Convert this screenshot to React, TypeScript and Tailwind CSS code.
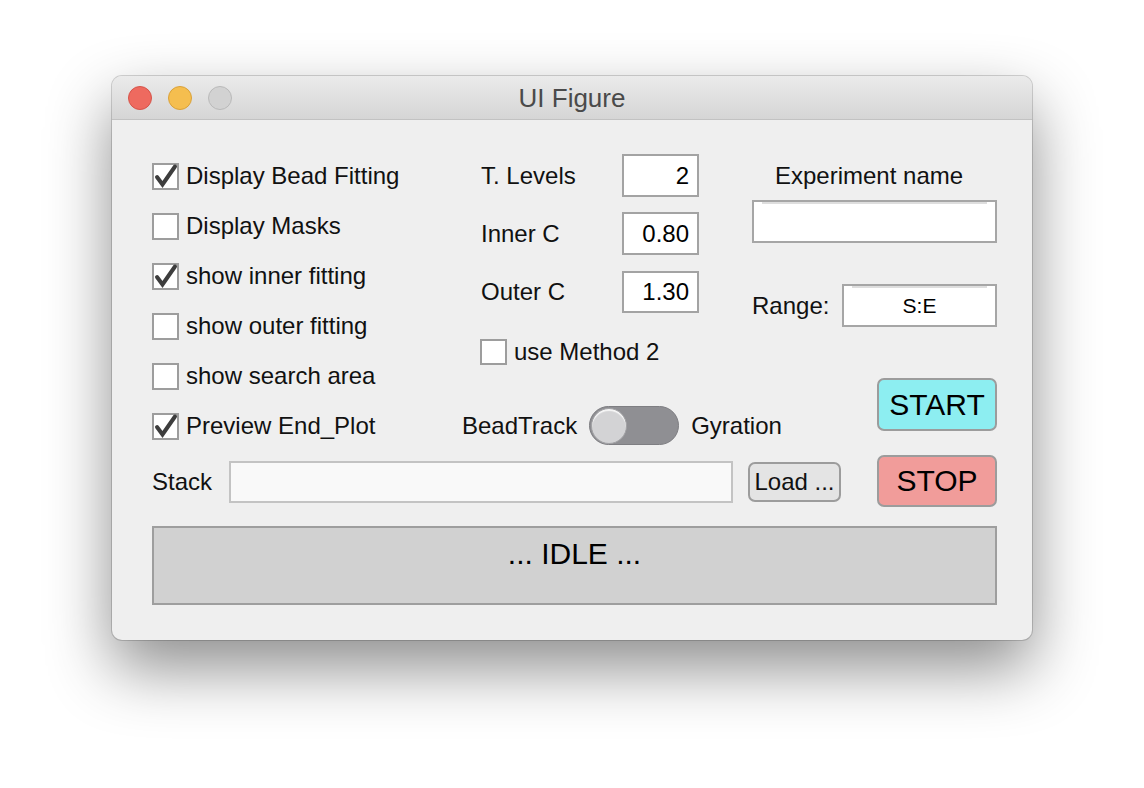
import React from 'react';

const font = { fontFamily: '"Liberation Sans", Arial, Helvetica, sans-serif' };

const CheckBox: React.FC<{ checked?: boolean }> = ({ checked }) => (
    <div className="w-[27px] h-[27px] border-2 border-[#9d9d9d] bg-white shrink-0 relative">
        {checked && (
            <svg viewBox="0 0 27 27" className="absolute -left-[2px] -top-[2px] w-[27px] h-[27px]">
                <path d="M5 14 L10.5 21.5 L23 3.5" fill="none" stroke="#3d3d3d" strokeWidth="4" strokeLinecap="round" strokeLinejoin="miter" />
            </svg>
        )}
    </div>
);

const CheckRow: React.FC<{ label: string; checked?: boolean }> = ({ label, checked }) => (
    <div className="h-[50px] flex items-center gap-[7px]">
        <CheckBox checked={checked} />
        <span className="text-[24px] leading-none text-[#111]">{label}</span>
    </div>
);

const NumField: React.FC<{ label: string; value: string; h: string }> = ({ label, value, h }) => (
    <div className="flex items-center pl-[19px]">
        <span className="w-[141px] shrink-0 text-[24px] leading-none text-[#111]">{label}</span>
        <div className={`w-[77px] shrink-0 ${h} border-2 border-[#a3a3a3] bg-white flex items-center justify-end pr-[8px] text-[24px] leading-none`}>
            {value}
        </div>
    </div>
);

export default function App() {
    return (
        <div className="min-h-screen w-full bg-white pt-[76px] pl-[112px]" style={font}>
            <div className="w-[920px] h-[564px] rounded-[10px] bg-[#efefef] overflow-hidden shadow-[0_28px_64px_rgba(0,0,0,0.45),0_0_0_1px_rgba(0,0,0,0.16)]">
                {/* title bar */}
                <div className="h-[44px] relative flex items-center justify-center bg-gradient-to-b from-[#ebebeb] to-[#d5d5d5] border-b border-[#c2c2c2]">
                    <div className="absolute left-[16px] top-[10px] flex gap-[16px]">
                        <div className="w-[24px] h-[24px] rounded-full bg-[#ee6a5f] border border-[#d5544a]" />
                        <div className="w-[24px] h-[24px] rounded-full bg-[#f5be4f] border border-[#d9a13a]" />
                        <div className="w-[24px] h-[24px] rounded-full bg-[#d2d2d2] border border-[#b9b9b9]" />
                    </div>
                    <span className="text-[26px] leading-none text-[#4a4a4a]">UI Figure</span>
                </div>

                {/* content */}
                <div className="pl-[40px] pr-[35px] pt-[31px] flex flex-col">
                    <div className="flex items-start">
                        <div className="w-[600px] shrink-0 flex flex-col">
                            <div className="flex">
                                <div className="w-[310px] shrink-0 flex flex-col">
                                    <CheckRow label="Display Bead Fitting" checked />
                                    <CheckRow label="Display Masks" />
                                    <CheckRow label="show inner fitting" checked />
                                    <CheckRow label="show outer fitting" />
                                    <CheckRow label="show search area" />
                                    <CheckRow label="Preview End_Plot" checked />
                                </div>
                                <div className="w-[290px] shrink-0 flex flex-col pt-[3px] whitespace-nowrap">
                                    <NumField label="T. Levels" value="2" h="h-[43px]" />
                                    <div className="h-[15px]" />
                                    <NumField label="Inner C" value="0.80" h="h-[43px]" />
                                    <div className="h-[16px]" />
                                    <NumField label="Outer C" value="1.30" h="h-[42px]" />
                                    <div className="flex items-center gap-[7px] pl-[18px] mt-[26px]">
                                        <div className="w-[27px] h-[26px] shrink-0 border-2 border-[#9d9d9d] bg-white" />
                                        <span className="text-[24px] leading-none text-[#111]">use Method 2</span>
                                    </div>
                                    <div className="flex items-center mt-[41px]">
                                        <span className="shrink-0 text-[24px] leading-none text-[#111]">BeadTrack</span>
                                        <div className="ml-[12px] w-[90px] h-[39px] shrink-0 rounded-full bg-[#8f8f93] border border-[#7e7e82] flex items-center p-[1px]">
                                            <div className="w-[36px] h-[36px] shrink-0 rounded-full bg-[#d3d3d5] border border-[#a2a2a5] shadow-[inset_0_2px_1px_rgba(255,255,255,0.8)]" />
                                        </div>
                                        <span className="ml-[12px] shrink-0 text-[24px] leading-none text-[#111]">Gyration</span>
                                    </div>
                                </div>
                            </div>
                            <div className="flex items-center mt-[10px] h-[42px] whitespace-nowrap">
                                <span className="w-[77px] shrink-0 text-[24px] leading-none text-[#111]">Stack</span>
                                <div className="w-[504px] h-[42px] shrink-0 border-2 border-[#c3c3c3] bg-[#f9f9f9]" />
                                <div className="ml-[15px] w-[93px] h-[40px] shrink-0 rounded-[7px] border-2 border-[#9c9c9c] bg-[#e4e4e4] flex items-center justify-center text-[24px] leading-none text-[#111]">
                                    Load ...
                                </div>
                            </div>
                        </div>

                        <div className="w-[245px] shrink-0 flex flex-col">
                            <div className="h-[49px] flex items-center pl-[23px] text-[24px] leading-none text-[#111]">Experiment name</div>
                            <div className="h-[43px] border-2 border-[#a6a6a6] bg-white">
                                <div className="h-[2px] mx-[8px] bg-[#dedede]" />
                            </div>
                            <div className="flex items-center justify-between mt-[41px]">
                                <span className="text-[24px] leading-none text-[#111]">Range:</span>
                                <div className="w-[155px] h-[43px] border-2 border-[#a6a6a6] bg-white flex flex-col">
                                    <div className="h-[2px] mx-[8px] bg-[#dedede]" />
                                    <div className="flex-1 flex items-center justify-center text-[21px] leading-none pb-[2px]">S:E</div>
                                </div>
                            </div>
                            <div className="self-end mt-[51px] w-[120px] h-[53px] rounded-[7px] border-2 border-[#9c9c9c] bg-[#8deef1] flex items-center justify-center text-[30px] leading-none text-black">
                                START
                            </div>
                            <div className="self-end mt-[24px] w-[120px] h-[52px] rounded-[7px] border-2 border-[#9c9c9c] bg-[#f19c9a] flex items-center justify-center text-[30px] leading-none text-black">
                                STOP
                            </div>
                        </div>
                    </div>

                    <div className="mt-[19px] h-[79px] border-2 border-[#9e9e9e] bg-[#d1d1d1] flex justify-center pt-[11px] text-[30px] leading-none text-black">
                        ... IDLE ...
                    </div>
                </div>
            </div>
        </div>
    );
}
